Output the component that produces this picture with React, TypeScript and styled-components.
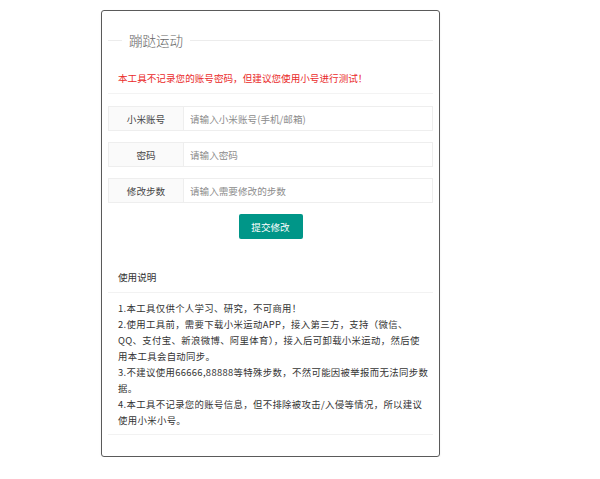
import React from 'react';
import styled, { createGlobalStyle } from 'styled-components';

// --- Styles ---
const GlobalStyle = createGlobalStyle`
  html, body {
    margin: 0;
    padding: 0;
    background: #ffffff;
  }
  body {
    font-family: "Noto Sans CJK SC", "Noto Sans", "Liberation Sans", sans-serif;
    color: #333333;
  }
`;

const Card = styled.div`
  box-sizing: border-box;
  width: 339px;
  margin: 10px 0 0 101px;
  padding: 19px 6px 21px;
  border: 1px solid #5a5a5a;
  border-radius: 3px;
  box-shadow: 0 1px 2px rgba(0, 0, 0, 0.08);
`;

// title with a rule on both sides, like a legend
const TitleRow = styled.div`
  display: flex;
  align-items: center;
  height: 20px;
  &::before,
  &::after {
    content: '';
    height: 1px;
    background: #ececec;
  }
  &::before {
    width: 14px;
  }
  &::after {
    flex: 1;
  }
`;

const Title = styled.span`
  padding: 0 7px;
  font-size: 13.5px;
  line-height: 20px;
  font-weight: 300;
  color: #666666;
`;

const Notice = styled.div`
  margin-top: 20px;
  padding: 0 10px 7px;
  font-size: 9.6px;
  line-height: 16px;
  color: #ea2a2a;
  border-bottom: 1px solid #f3f3f3;
`;

const Form = styled.div`
  display: flex;
  flex-direction: column;
  gap: 11px;
  margin-top: 12px;
`;

const Row = styled.div`
  display: flex;
  height: 25px;
  box-sizing: border-box;
  border: 1px solid #eeeeee;
`;

const Label = styled.div`
  flex: 0 0 74px;
  display: flex;
  align-items: center;
  justify-content: center;
  background: #fafafa;
  border-right: 1px solid #eeeeee;
  font-size: 9.6px;
  color: #444444;
`;

const Input = styled.input`
  flex: 1;
  min-width: 0;
  border: none;
  outline: none;
  padding: 0 0 0 6px;
  background: #ffffff;
  font-family: inherit;
  font-size: 9.6px;
  color: #333333;
  &::placeholder {
    color: #8c8c8c;
  }
`;

const Actions = styled.div`
  display: flex;
  justify-content: center;
  margin-top: 11px;
`;

const SubmitButton = styled.button`
  width: 64px;
  height: 25px;
  border: none;
  border-radius: 2px;
  background: #009688;
  color: #ffffff;
  font-family: inherit;
  font-size: 9.6px;
  cursor: pointer;
`;

const Section = styled.div`
  margin-top: 23px;
`;

const SectionHeader = styled.div`
  height: 30px;
  line-height: 30px;
  padding: 0 10px;
  font-size: 9.6px;
  color: #333333;
  border-bottom: 1px solid #f2f2f2;
`;

// the original breaks lines at fixed points, so they are kept as given
const SectionBody = styled.div`
  padding: 7px 8px 6px 10px;
  font-size: 9.4px;
  line-height: 16px;
  letter-spacing: 0.35px;
  color: #333333;
  white-space: nowrap;
  overflow: hidden;
  border-bottom: 1px solid #f2f2f2;
  p {
    margin: 0;
  }
`;
// --- End Styles ---

const fields = [
  { label: '小米账号', placeholder: '请输入小米账号(手机/邮箱)', type: 'text' },
  { label: '密码', placeholder: '请输入密码', type: 'password' },
  { label: '修改步数', placeholder: '请输入需要修改的步数', type: 'text' },
];

// each note split into the lines shown
const notes: string[][] = [
  ['1.本工具仅供个人学习、研究，不可商用！'],
  [
    '2.使用工具前，需要下载小米运动APP，接入第三方，支持（微信、',
    'QQ、支付宝、新浪微博、阿里体育），接入后可卸载小米运动，然后使',
    '用本工具会自动同步。',
  ],
  ['3.不建议使用66666,88888等特殊步数，不然可能因被举报而无法同步数', '据。'],
  ['4.本工具不记录您的账号信息，但不排除被攻击/入侵等情况，所以建议', '使用小米小号。'],
];

export default function App() {
  return (
    <>
      <GlobalStyle />
      <Card>
        <TitleRow>
          <Title>蹦跶运动</Title>
        </TitleRow>
        <Notice>本工具不记录您的账号密码，但建议您使用小号进行测试！</Notice>

        <Form>
          {fields.map((f) => (
            <Row key={f.label}>
              <Label>{f.label}</Label>
              <Input type={f.type} placeholder={f.placeholder} />
            </Row>
          ))}
        </Form>

        <Actions>
          <SubmitButton type="button">提交修改</SubmitButton>
        </Actions>

        <Section>
          <SectionHeader>使用说明</SectionHeader>
          <SectionBody>
            {notes.map((lines, i) => (
              <p key={i}>
                {lines.map((line, j) => (
                  <React.Fragment key={j}>
                    {j > 0 && <br />}
                    {line}
                  </React.Fragment>
                ))}
              </p>
            ))}
          </SectionBody>
        </Section>
      </Card>
    </>
  );
}
